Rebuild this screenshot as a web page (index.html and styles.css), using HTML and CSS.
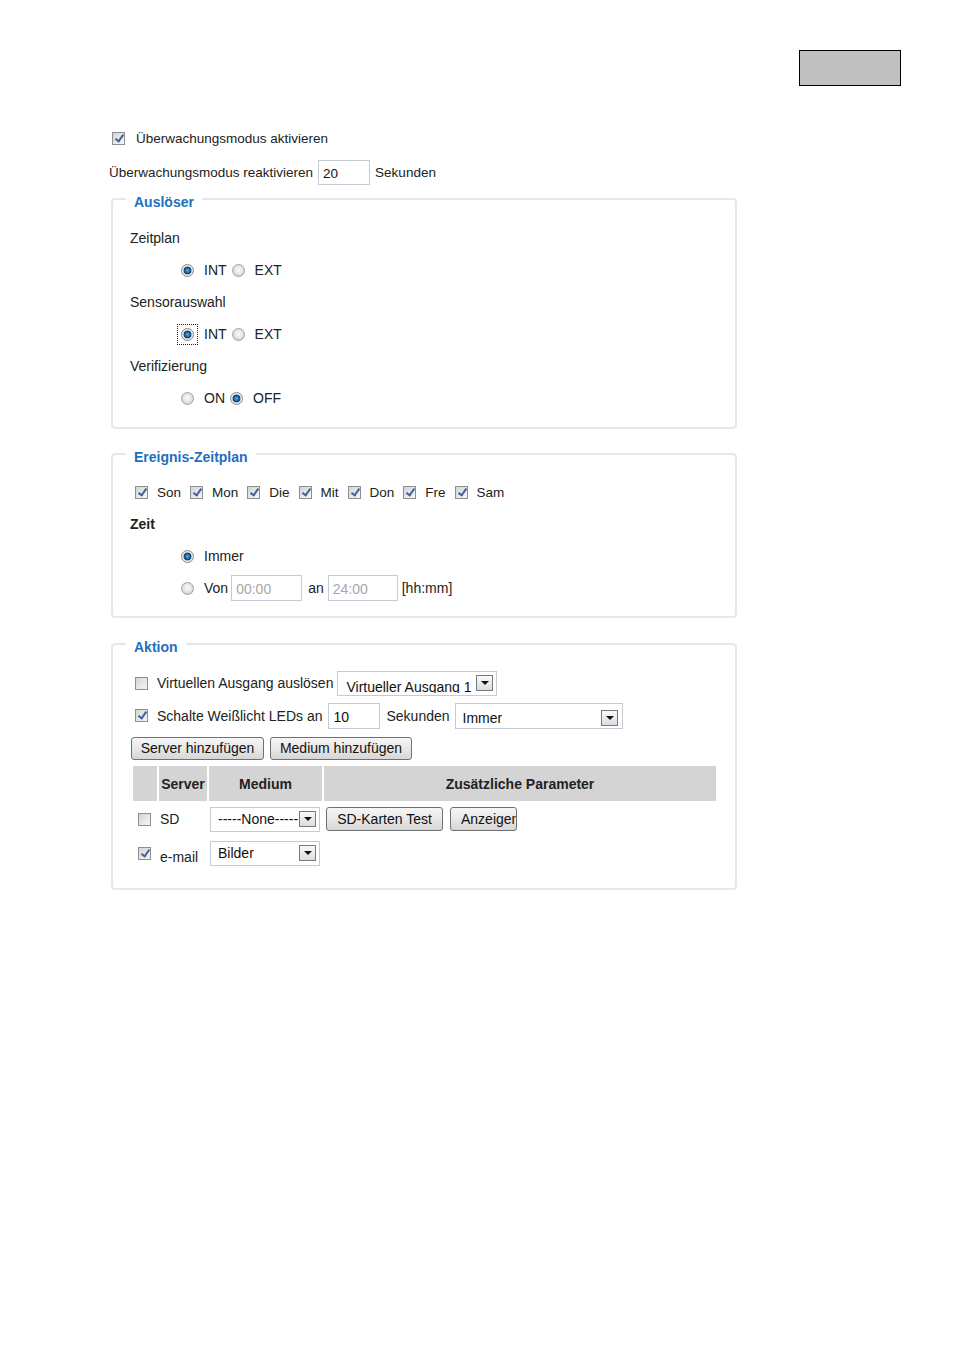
FILE: index.html
```html
<!DOCTYPE html>
<html lang="de">
<head>
<meta charset="utf-8">
<title>Überwachungsmodus</title>
<link rel="stylesheet" href="styles.css">
</head>
<body>
<div class="topbar"><div class="graybox"></div></div>
<div class="main">
  <div class="row r-top1"><span class="cb on"></span><span class="lbl">Überwachungsmodus aktivieren</span></div>
  <div class="row r-top2"><span>Überwachungsmodus reaktivieren</span><span class="inp w51">20</span><span class="after-inp">Sekunden</span></div>

  <fieldset class="group g1">
    <legend>Auslöser</legend>
    <div class="row">Zeitplan</div>
    <div class="row indent"><span class="rd on"></span><span class="rl">INT</span><span class="rd"></span><span class="rl">EXT</span></div>
    <div class="row">Sensorauswahl</div>
    <div class="row indent"><span class="focus"><span class="rd on"></span></span><span class="rl">INT</span><span class="rd"></span><span class="rl">EXT</span></div>
    <div class="row">Verifizierung</div>
    <div class="row indent"><span class="rd"></span><span class="rl">ON</span><span class="rd on"></span><span class="rl">OFF</span></div>
  </fieldset>

  <fieldset class="group g2">
    <legend>Ereignis-Zeitplan</legend>
    <div class="row days">
      <span class="cb on"></span><span class="dl">Son</span>
      <span class="cb on"></span><span class="dl">Mon</span>
      <span class="cb on"></span><span class="dl">Die</span>
      <span class="cb on"></span><span class="dl">Mit</span>
      <span class="cb on"></span><span class="dl">Don</span>
      <span class="cb on"></span><span class="dl">Fre</span>
      <span class="cb on"></span><span class="dl">Sam</span>
    </div>
    <div class="row bold">Zeit</div>
    <div class="row indent"><span class="rd on"></span><span class="rl">Immer</span></div>
    <div class="row indent"><span class="rd"></span><span class="rl">Von</span><span class="inp dis w71">00:00</span><span class="an">an</span><span class="inp dis w70">24:00</span><span class="hh">[hh:mm]</span></div>
  </fieldset>

  <fieldset class="group g3">
    <legend>Aktion</legend>
    <div class="row act1"><span class="cb"></span><span class="al">Virtuellen Ausgang auslösen</span><span class="sel s-virt"><span class="st">Virtueller Ausgang 1</span><span class="arrow"></span></span></div>
    <div class="row act2"><span class="cb on"></span><span class="al">Schalte Weißlicht LEDs an</span><span class="inp w52">10</span><span class="sek">Sekunden</span><span class="sel s-immer"><span class="st">Immer</span><span class="arrow"></span></span></div>
    <div class="row btns"><span class="btn b-server">Server hinzufügen</span><span class="btn b-medium">Medium hinzufügen</span></div>
    <table class="tbl">
      <thead>
        <tr><th class="c1"></th><th class="c2">Server</th><th class="c3">Medium</th><th class="c4">Zusätzliche Parameter</th></tr>
      </thead>
      <tbody>
        <tr>
          <td class="c1"><span class="cb"></span></td>
          <td class="c2">SD</td>
          <td class="c3"><span class="sel s-med"><span class="st">-----None-----</span><span class="arrow"></span></span></td>
          <td class="c4"><span class="btn b-sd">SD-Karten Test</span><span class="btn b-anz">Anzeigen</span></td>
        </tr>
        <tr>
          <td class="c1"><span class="cb on"></span></td>
          <td class="c2"><span class="email">e-mail</span></td>
          <td class="c3"><span class="sel s-med"><span class="st">Bilder</span><span class="arrow"></span></span></td>
          <td class="c4"></td>
        </tr>
      </tbody>
    </table>
  </fieldset>
</div>
</body>
</html>
```
FILE: styles.css
```css
body {
  margin: 0;
  background: #fff;
  color: #222;
  font-family: "Liberation Sans", Arial, sans-serif;
  font-size: 14px;
}

.topbar {
  display: flex;
  justify-content: flex-end;
  padding: 50px 53px 0 0;
}

.graybox {
  width: 100px;
  height: 34px;
  background: #c0c0c0;
  border: 1px solid #000;
}

.main {
  margin-left: 109px;
}

.row {
  display: flex;
  align-items: center;
  height: 32px;
  white-space: nowrap;
}

/* checkbox */
.cb {
  position: relative;
  flex: none;
  display: inline-block;
  width: 13px;
  height: 13px;
  box-sizing: border-box;
  border: 1px solid #8f8f8f;
  background: linear-gradient(135deg, #d2d4d8 0%, #e8e9eb 60%, #f6f6f6 100%);
}
.cb.on::after {
  content: "";
  position: absolute;
  left: 4px;
  top: 0px;
  width: 3px;
  height: 7px;
  border: solid #45609a;
  border-width: 0 2px 2px 0;
  transform: rotate(35deg);
}

/* radio */
.rd {
  flex: none;
  display: inline-block;
  width: 13px;
  height: 13px;
  box-sizing: border-box;
  border-radius: 50%;
  border: 1px solid #a4a4a4;
  background: radial-gradient(circle at 50% 45%, #fbfbfb 0, #e6e6e6 4px, #cfcfcf 6px);
}
.rd.on {
  border-color: #8a8a8a;
  background: radial-gradient(circle at 50% 50%, #5cc0f5 0, #2a7fc0 1.5px, #14508a 3px, #2c3e55 3.6px, #d4d4d4 4.2px, #f2f2f2 5.5px);
}

.focus {
  display: inline-flex;
  flex: none;
  padding: 3px;
  border: 1px dotted #222;
  margin: 0 -4px;
}

.r-top1 {
  height: 20px;
  margin-top: 42px;
  padding-left: 3px;
  font-size: 13.5px;
}
.r-top1 .lbl {
  margin-left: 11px;
}

.r-top2 {
  height: 26px;
  margin-top: 11px;
  font-size: 13.5px;
}

.inp {
  flex: none;
  display: inline-flex;
  align-items: flex-end;
  box-sizing: border-box;
  height: 26px;
  padding: 0 0 3px 4px;
  border: 1px solid #c3ccd5;
  background: #fff;
  color: #111;
}
.inp.dis {
  color: #a8a8a8;
}
.w51 { width: 52px; height: 25px; margin-left: 5px; }
.w52 { width: 52px; margin-left: 6px; }
.w71 { width: 71px; height: 26px; margin-left: -2px; }
.w70 { width: 70px; height: 26px; }
.after-inp { margin-left: 5px; }

/* fieldsets */
.group {
  box-sizing: border-box;
  width: 626px;
  margin: 2px 0 0 2px;
  padding: 11px 0 13px 17px;
  border: 2px solid #e2e8ee;
  border-radius: 4px;
}
.group legend {
  margin-left: -4px;
  padding: 6px 8px 0 8px;
  color: #1f6fc0;
  font-weight: bold;
  font-size: 14px;
  line-height: 18px;
}
.g2 {
  margin-top: 13px;
  padding-top: 10px;
  padding-bottom: 12px;
}
.g3 {
  margin-top: 14px;
  padding-top: 11px;
  padding-bottom: 17px;
}

.indent {
  padding-left: 51px;
}
.rl {
  margin: 0 5px 0 10px;
}

.days { font-size: 13.5px; }
.days .cb:first-child { margin-left: 5px; }
.dl { margin: 0 9px 0 9px; }

.bold { font-weight: bold; }

.an { margin: 0 4px 0 6px; }
.hh { margin-left: 4px; }

/* aktion */
.act1 .cb, .act2 .cb { margin-left: 5px; }
.al { margin-left: 9px; }
.act2 { height: 33px; }
.sek { margin: 0 5px 0 6px; }

.sel {
  flex: none;
  display: inline-flex;
  align-items: center;
  justify-content: space-between;
  box-sizing: border-box;
  border: 1px solid #c3ccd5;
  background: #fff;
  color: #111;
  overflow: hidden;
}
.st {
  overflow: hidden;
  white-space: nowrap;
}
.arrow {
  flex: none;
  position: relative;
  box-sizing: border-box;
  width: 17px;
  height: 16px;
  border: 1px solid #7a7a7a;
  background: linear-gradient(#fafafa, #dcdcdc);
}
.arrow::after {
  content: "";
  position: absolute;
  left: 4px;
  top: 5px;
  border-style: solid;
  border-width: 4px 4px 0 4px;
  border-color: #111 transparent transparent transparent;
}

.s-virt {
  width: 160px;
  height: 25px;
  margin-left: 4px;
  padding: 0 3px 0 8px;
}
.s-virt .st {
  height: 17px;
  line-height: 22px;
  align-self: flex-end;
  margin-bottom: 2px;
}
.s-immer {
  width: 168px;
  height: 26px;
  padding: 4px 4px 0 7px;
}
.s-med {
  width: 110px;
  height: 25px;
  padding: 0 3px 0 7px;
}

.btns {
  height: 32px;
}
.btn {
  flex: none;
  display: inline-flex;
  align-items: center;
  justify-content: center;
  box-sizing: border-box;
  height: 23px;
  border: 1px solid #707070;
  border-radius: 3px;
  background: linear-gradient(#f6f6f6 0%, #e8e8e8 50%, #d6d6d6 100%);
  color: #111;
  white-space: nowrap;
  overflow: hidden;
}
.b-server { width: 133px; margin-left: 1px; }
.b-medium { width: 142px; margin-left: 6px; }
.b-sd { width: 117px; height: 24px; margin-left: 2px; }
.b-anz { width: 67px; height: 24px; margin-left: 7px; justify-content: flex-start; padding-left: 10px; }

.tbl {
  width: 587px;
  margin-left: 1px;
  border-collapse: separate;
  border-spacing: 2px;
}
.tbl th {
  height: 35px;
  padding: 0;
  background: #d4d4d4;
  color: #222;
  font-weight: bold;
  text-align: center;
}
.tbl td {
  height: 32px;
  padding: 0;
  white-space: nowrap;
}
.tbl .c1 { width: 24px; }
.tbl .c2 { width: 47px; }
.tbl .c3 { width: 112px; }
.tbl td.c1 { padding-left: 5px; box-sizing: border-box; }
.tbl td.c1 .cb { display: block; }
.tbl td.c2 { padding-left: 1px; }
.tbl td.c3 { padding-left: 1px; }
.tbl td.c4 { padding-left: 0; }
.tbl td.c4 .btn { vertical-align: middle; }
.email {
  display: inline-block;
  padding-top: 7px;
}
```
